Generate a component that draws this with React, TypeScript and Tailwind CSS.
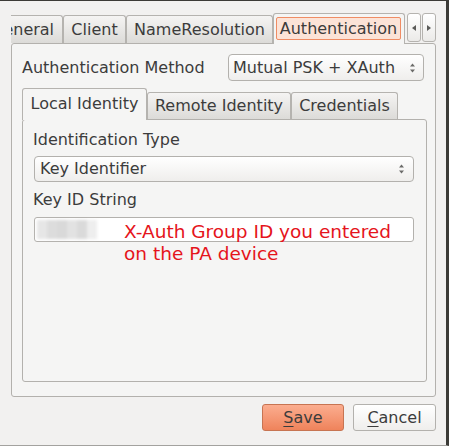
import React from "react";

const unTab =
  "flex items-center justify-center shrink-0 h-[28px] mb-px border border-b-0 border-[#b5b3af] rounded-t-[3px] bg-linear-to-b from-[#f5f4f3] to-[#dcdbd8]";
const unTabInner =
  "flex items-center justify-center shrink-0 h-[27px] mb-px border border-b-0 border-[#b5b3af] rounded-t-[3px] bg-linear-to-b from-[#f5f4f3] to-[#dcdbd8]";

function ComboArrows() {
  return (
    <svg width="7" height="12" viewBox="0 0 7 12" className="shrink-0">
      <path d="M3.5 1.5 L6 4.5 L1 4.5 Z" fill="#6a6a68" />
      <path d="M3.5 10.5 L6 7.5 L1 7.5 Z" fill="#6a6a68" />
    </svg>
  );
}

export default function App() {
  return (
    <div className="w-[449px] h-[446px] bg-[#f2f1f0] border-t border-t-[#3c3b37] border-r-[3px] border-r-[#3c3b37] border-b border-b-[#a3a29f] overflow-hidden relative font-['DejaVu_Sans',sans-serif] text-[16px] text-[#3c3c3c] leading-[20px]">
      <div className="pl-[11px] pt-[12px] flex flex-col">
        {/* Outer tab bar */}
        <div className="flex items-end h-[31px] w-[425px] relative z-10">
          <div className="flex items-end h-full w-[394px] overflow-hidden">
            <div className={unTab + " w-[73px] ml-[-21px] !justify-start pl-0"}>General</div>
            <div className={unTab + " w-[63px]"}>Client</div>
            <div className={unTab + " w-[147px]"}>NameResolution</div>
            <div className="shrink-0 w-[132px] h-[31px] border border-b-0 border-[#b5b3af] rounded-t-[3px] bg-[#f5f5f4] pt-[3px] pl-[2px]">
              <div className="w-[125px] h-[23px] border border-[#ef8c64] bg-[#fce3d7] rounded-[2px] flex items-center justify-center">
                Authentication
              </div>
            </div>
          </div>
          <div className="flex ml-[2px] gap-px mb-px self-end">
            <div className="w-[14px] h-[29px] mb-px border border-[#b5b3af] rounded-[3px] bg-linear-to-b from-[#ffffff] to-[#ebeae8] flex items-center justify-center">
              <svg width="6" height="8" viewBox="0 0 6 8">
                <path d="M1 4 L5 1 L5 7 Z" fill="#5a5a58" />
              </svg>
            </div>
            <div className="w-[14px] h-[29px] mb-px border border-[#b5b3af] rounded-[3px] bg-linear-to-b from-[#ffffff] to-[#ebeae8] flex items-center justify-center">
              <svg width="6" height="8" viewBox="0 0 6 8">
                <path d="M5 4 L1 1 L1 7 Z" fill="#5a5a58" />
              </svg>
            </div>
          </div>
        </div>

        {/* Outer pane */}
        <div className="w-[425px] h-[354px] -mt-px border border-[#b3b1ad] rounded-[3px] bg-[#f5f5f4] flex flex-col">
          <div className="flex items-center justify-between h-[27px] mt-[10px] pl-[10px] pr-[11px]">
            <span>Authentication Method</span>
            <div className="w-[196px] h-[27px] border border-[#b3b1ad] rounded-[4px] bg-linear-to-b from-[#ffffff] to-[#efeeec] flex items-center justify-between pl-[4px] pr-[7px]">
              <span>Mutual PSK + XAuth</span>
              <ComboArrows />
            </div>
          </div>

          {/* Inner tab widget */}
          <div className="ml-[10px] mt-[7px] flex flex-col">
            <div className="flex items-end h-[32px] relative z-10">
              <div className="shrink-0 w-[125px] h-[32px] border border-b-0 border-[#b5b3af] rounded-t-[3px] bg-[#f5f5f4] flex items-center justify-center pb-[2px]">
                Local Identity
              </div>
              <div className={unTabInner + " w-[144px]"}>Remote Identity</div>
              <div className={unTabInner + " w-[107px]"}>Credentials</div>
            </div>
            <div className="w-[405px] h-[263px] -mt-px border border-[#b3b1ad] rounded-[3px] bg-[#f5f5f4] flex flex-col pl-[10px] relative">
              <div className="mt-[10px]">Identification Type</div>
              <div className="ml-px mt-[6px] w-[380px] h-[26px] border border-[#b3b1ad] rounded-[4px] bg-linear-to-b from-[#ffffff] to-[#efeeec] flex items-center justify-between pl-[5px] pr-[8px]">
                <span>Key Identifier</span>
                <ComboArrows />
              </div>
              <div className="mt-[8px]">Key ID String</div>
              <div className="ml-px mt-[7px] w-[380px] h-[25px] border border-[#b3b1ad] rounded-[3px] bg-white flex items-center pl-[2px]">
                <div className="flex h-[19px] blur-[1.5px]">
                  <div className="w-[10px] bg-[#e6e6e6]" />
                  <div className="w-[10px] bg-[#dcdcdc]" />
                  <div className="w-[10px] bg-[#d9d9d9]" />
                  <div className="w-[10px] bg-[#e2e2e2]" />
                  <div className="w-[10px] bg-[#dadada]" />
                  <div className="w-[10px] bg-[#eeeeee]" />
                </div>
              </div>
            </div>
          </div>
        </div>

        {/* Buttons */}
        <div className="w-[425px] flex justify-end gap-[9px] mt-[7px]">
          <div className="w-[82px] h-[27px] border border-[#c77452] rounded-[3px] bg-linear-to-b from-[#fbad8f] to-[#ef835b] flex items-center justify-center">
            <span>
              <span className="underline underline-offset-[3px]">S</span>ave
            </span>
          </div>
          <div className="w-[83px] h-[27px] border border-[#b3b1ad] rounded-[3px] bg-linear-to-b from-[#ffffff] to-[#efeeec] flex items-center justify-center">
            <span>
              <span className="underline underline-offset-[3px]">C</span>ancel
            </span>
          </div>
        </div>
      </div>

      {/* Red annotation */}
      <div className="absolute left-[124px] top-[220px] text-[18.5px] leading-[22px] text-[#e5141b]">
        X-Auth Group ID you entered
        <br />
        on the PA device
      </div>
    </div>
  );
}
